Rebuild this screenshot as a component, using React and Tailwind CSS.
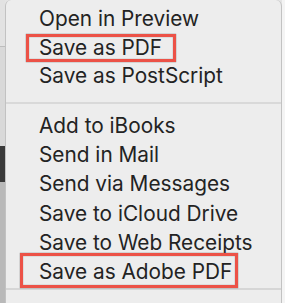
import React from 'react'

const groupOne = ['Open in Preview', 'Save as PDF', 'Save as PostScript']
const groupTwo = [
  'Add to iBooks',
  'Send in Mail',
  'Send via Messages',
  'Save to iCloud Drive',
  'Save to Web Receipts',
  'Save as Adobe PDF',
]

function Row({ label, tall }) {
  return (
    <div className={`pl-[33px] text-[20.8px] text-[#232323] whitespace-nowrap ${tall ? 'h-[29.4px] leading-[29.4px]' : 'h-[28.5px] leading-[28.5px]'}`}>
      {label}
    </div>
  )
}

export default function App() {
  return (
    <div
      className="relative w-[285px] h-[303px] overflow-hidden flex bg-[#e4e4e4]"
      style={{ fontFamily: 'Inter, "Liberation Sans", sans-serif' }}
    >
      {/* what shows behind the menu on the left */}
      <div className="w-[5px] flex flex-col">
        <div className="h-[47px] bg-[#e2e2e2] border-b border-[#bdbdbd]" />
        <div className="h-[99px] bg-[#d9d9d9]" />
        <div className="h-[36px] bg-[#3a3a3a]" />
        <div className="flex-1 bg-[#b9b9b9]" />
      </div>

      {/* menu */}
      <div className="w-[277px] h-full bg-[#ededed] border-x border-[#c2c2c2] rounded-t-[6px] flex flex-col">
        <div className="pt-[5px]">
          {groupOne.map((l) => <Row key={l} label={l} />)}
        </div>
        <div className="mt-[11px] h-[2px] bg-[#d9d9d9]" />
        <div className="mt-[7px]">
          {groupTwo.map((l) => <Row key={l} label={l} tall />)}
        </div>
        <div className="mt-[1px] h-[2px] bg-[#d6d6d6]" />
      </div>

      <div className="flex-1 bg-[#f4f4f4]" />

      {/* highlight annotations */}
      <div className="absolute left-[26px] top-[34px] w-[150px] h-[28px] border-[3px] border-[#ec5247] shadow-[inset_0_0_1px_#555,0_0_1px_#555]" />
      <div className="absolute left-[20px] top-[253px] w-[218px] h-[35px] border-[3px] border-[#ec5247] shadow-[inset_0_0_1px_#555,0_0_1px_#555]" />
    </div>
  )
}
